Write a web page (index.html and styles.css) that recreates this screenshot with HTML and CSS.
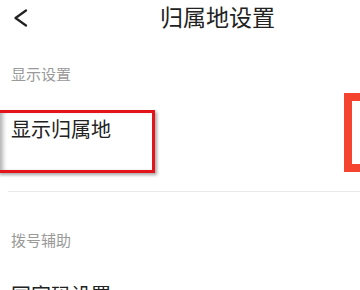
FILE: index.html
```html
<!DOCTYPE html>
<html lang="zh-CN">
<head>
<meta charset="utf-8">
<title>归属地设置</title>
<link rel="stylesheet" href="styles.css">
</head>
<body>
<div class="page">
  <header class="header">
    <svg class="back" width="16" height="18" viewBox="0 0 16 18"><path d="M13 1.5 L2.5 9 L13 16.5" fill="none" stroke="#222" stroke-width="2.2" stroke-linecap="round" stroke-linejoin="round"/></svg>
    <h1 class="title">归属地设置</h1>
  </header>
  <div class="section-label first">显示设置</div>
  <div class="row first-row">
    <span class="row-text">显示归属地</span>
    <div class="mark mark-left"></div>
    <div class="mark mark-right"></div>
  </div>
  <div class="divider"></div>
  <div class="section-label second">拨号辅助</div>
  <div class="row">
    <span class="row-text">国家码设置</span>
  </div>
</div>
</body>
</html>
```
FILE: styles.css
```css
html, body {
  margin: 0;
  padding: 0;
  background: #fff;
}
body {
  font-family: "Noto Sans CJK SC", "Noto Sans", sans-serif;
  overflow: hidden;
}
.page {
  width: 360px;
  height: 290px;
  overflow: hidden;
  position: relative;
}
.header {
  display: flex;
  align-items: center;
  height: 36px;
  box-sizing: border-box;
}
.back {
  margin-left: 13px;
  margin-top: 0;
  flex: none;
}
.title {
  margin: 0 0 0 131px;
  font-size: 23px;
  font-weight: 400;
  line-height: 23px;
  color: #222;
  padding-bottom: 3px;
}
.section-label {
  font-size: 15px;
  line-height: 15px;
  color: #9a9a9a;
  padding-left: 11px;
}
.section-label.first {
  margin-top: 30px;
}
.section-label.second {
  margin-top: 40px;
}
.row {
  position: relative;
  padding-left: 11px;
}
.row-text {
  font-size: 20px;
  line-height: 20px;
  color: #222;
  display: block;
}
.first-row {
  margin-top: 38px;
  height: 72px;
}
.row:last-child {
  margin-top: 38px;
}
.divider {
  height: 1px;
  background: #e9e9e9;
  margin-left: 8px;
}
.mark {
  position: absolute;
  box-sizing: border-box;
}
.mark-left {
  left: -3px;
  top: -9px;
  width: 158px;
  height: 63px;
  border: 3px solid #e3141a;
  box-shadow: 2px 2px 3px rgba(0, 0, 0, 0.35), inset 5px 0 4px -2px rgba(0, 0, 0, 0.3);
}
.mark-right {
  left: 344px;
  top: -26px;
  width: 30px;
  height: 79px;
  border: 8px solid #f4432f;
}
```
